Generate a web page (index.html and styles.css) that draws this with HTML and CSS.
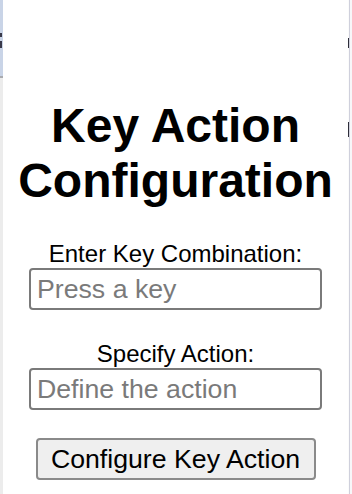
FILE: index.html
```html
<!DOCTYPE html>
<html>
<head>
<meta charset="utf-8">
<link rel="stylesheet" href="styles.css">
</head>
<body>
<div class="frame">
  <div class="edge-left"></div>
  <main class="popup">
    <h1 class="title">Key Action Configuration</h1>
    <label class="field-label" for="key">Enter Key Combination:</label>
    <input class="field" id="key" type="text" placeholder="Press a key">
    <label class="field-label second" for="action">Specify Action:</label>
    <input class="field" id="action" type="text" placeholder="Define the action">
    <button class="submit" type="button">Configure Key Action</button>
  </main>
  <div class="edge-right"></div>
</div>
</body>
</html>
```

FILE: styles.css
```css
html, body {
  margin: 0;
  padding: 0;
  background: #ffffff;
}

.frame {
  display: flex;
  width: 352px;
  height: 494px;
  overflow: hidden;
  font-family: "Liberation Sans", Arial, Helvetica, sans-serif;
}

.edge-left {
  width: 3px;
  flex: none;
  background:
    linear-gradient(#3a3a4a, #3a3a4a) 0 33px / 2px 4px no-repeat,
    linear-gradient(#3a3a4a, #3a3a4a) 0 41px / 2px 7px no-repeat,
    linear-gradient(to bottom, #c9d4e7 0 76px, #a9abb0 76px 78px, #ececec 78px 100%);
}

.edge-right {
  width: 4px;
  flex: none;
  background:
    linear-gradient(#2e2e3a, #2e2e3a) 0 38px / 1px 10px no-repeat,
    linear-gradient(#2e2e3a, #2e2e3a) 0 122px / 1px 15px no-repeat,
    linear-gradient(to right, #fbfbfb 0 1px, #cfd0dc 1px 2px, #f7f7f9 2px 100%);
}

.popup {
  flex: 1;
  padding-top: 98px;
  text-align: center;
  color: #000000;
}

.title {
  margin: 0 0 32px;
  font-size: 48px;
  line-height: 55px;
  font-weight: bold;
}

.field-label {
  display: block;
  font-size: 24px;
  line-height: 28px;
}

.field-label.second {
  margin-top: 30px;
}

.field {
  display: block;
  box-sizing: border-box;
  width: 293px;
  height: 42px;
  margin: 0 auto;
  padding: 0 6px;
  border: 2px solid #7a7a7a;
  border-radius: 4px;
  font-family: inherit;
  font-size: 26.7px;
  color: #000;
  background: #fff;
}

.field::placeholder {
  color: #7a7a7a;
}

.submit {
  display: block;
  box-sizing: border-box;
  width: 280px;
  height: 42px;
  margin: 28px auto 0;
  padding: 0;
  border: 2px solid #8a8a8a;
  border-radius: 4px;
  background: #efefef;
  font-family: inherit;
  font-size: 26.7px;
  color: #000;
}
```
